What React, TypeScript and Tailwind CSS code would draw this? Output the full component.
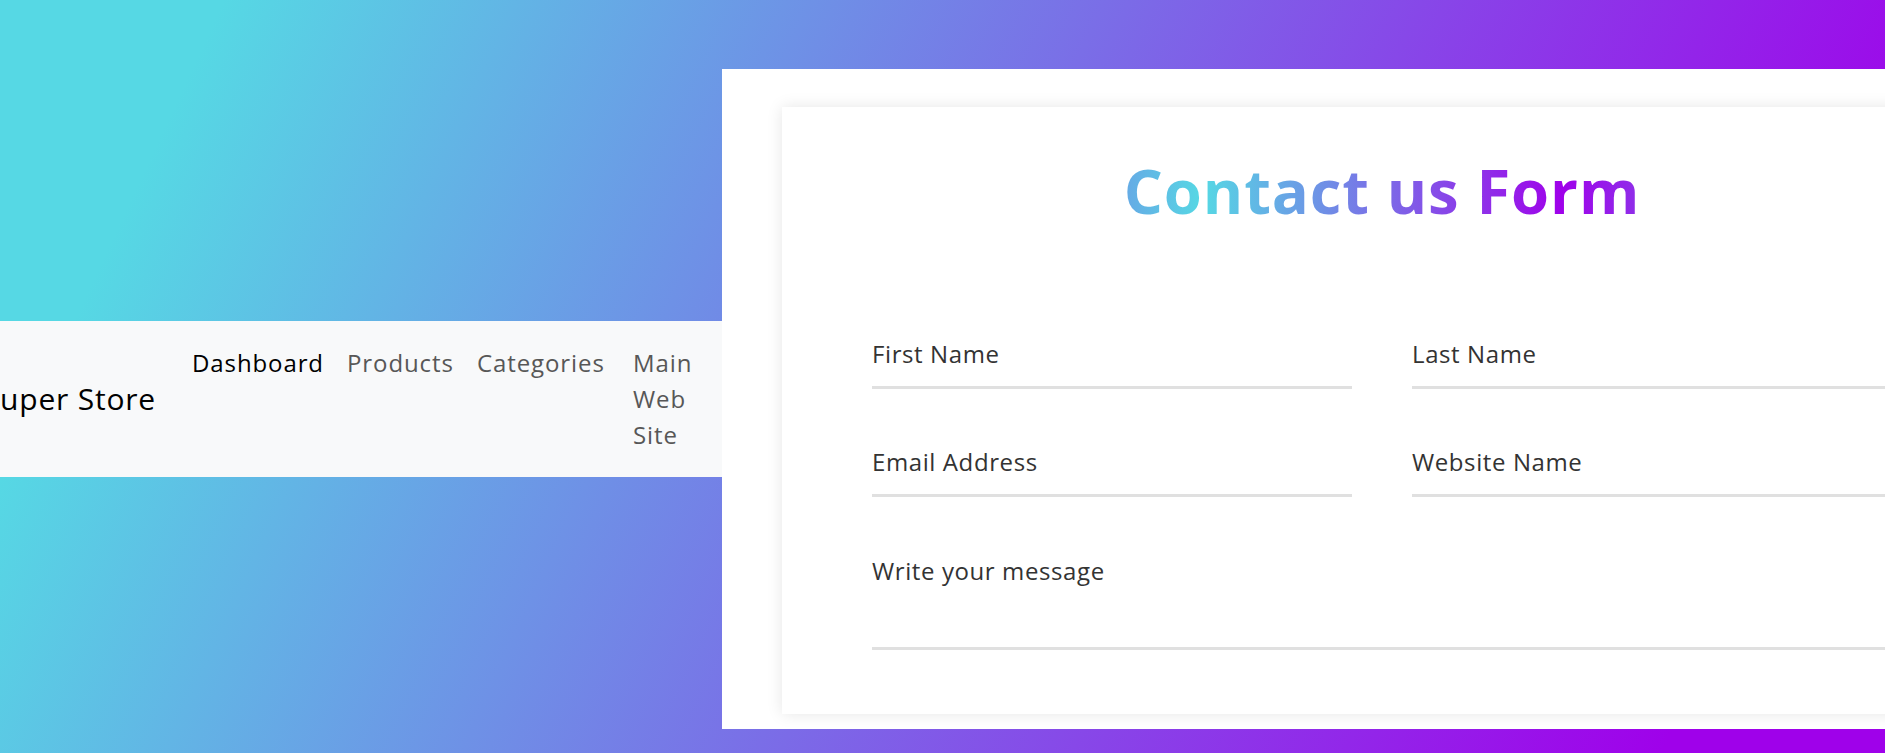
const links = [
  { label: "Dashboard", w: "w-[131px]", active: true },
  { label: "Products", w: "w-[106px]", active: false },
  { label: "Categories", w: "w-[132px]", active: false },
  { label: "Main Web Site", w: "w-[58px]", active: false },
];

const Field = ({ label, tall }: { label: string; tall?: boolean }) => {
  return (
    <div
      className={`flex-1 flex items-end border-b-[3px] border-[#e0e0e0] ${tall ? "h-[105px]" : "h-[60px]"}`}
    >
      <span
        className={`text-[24px] leading-[36px] tracking-[0.6px] text-[#333] ${tall ? "mb-[57.5px]" : "mb-[13.5px]"}`}
      >
        {label}
      </span>
    </div>
  );
};

export default function App() {
  return (
    <div className="w-[1885px] h-[753px] overflow-hidden bg-[linear-gradient(115deg,#56d8e4_10%,#9f01ea_90%)] font-['Open_Sans',sans-serif]">
      <div className="flex items-center pt-[69px]">
        {/* navbar, cut off on the left */}
        <nav className="ml-[-36px] w-[758px] shrink-0 bg-[#f8f9fa] py-[12px] pl-[18px] flex items-center">
          <a className="w-[174px] mr-[24px] py-[7.5px] text-right text-[30px] leading-[45px] text-black tracking-[0.8px] whitespace-nowrap">
            Super Store
          </a>
          <ul className="flex items-start">
            {links.map((l) => (
              <li key={l.label} className="px-[12px] py-[12px]">
                <a
                  className={`block ${l.w} text-[24px] leading-[36px] tracking-[0.9px] ${l.active ? "text-black" : "text-[#575757]"}`}
                >
                  {l.label}
                </a>
              </li>
            ))}
          </ul>
        </nav>

        <div className="w-[1320px] shrink-0 bg-white pt-[37.5px] px-[60px] pb-[15px]">
          <div className="bg-white shadow-[0_0_15px_rgba(0,0,0,0.1)] pt-[37.5px] px-[60px] pb-[15px]">
            <h1 className="text-center text-[61.5px] leading-[92px] font-bold tracking-[0.9px] bg-[linear-gradient(to_left,#56d8e4,#9f01ea,#56d8e4,#9f01ea)] bg-clip-text text-transparent">
              Contact us Form
            </h1>
            <form className="mt-[92.5px] mb-[49px]">
              <div className="flex gap-[60px] px-[30px]">
                <Field label="First Name" />
                <Field label="Last Name" />
              </div>
              <div className="flex gap-[60px] px-[30px] mt-[48px]">
                <Field label="Email Address" />
                <Field label="Website Name" />
              </div>
              <div className="flex px-[30px] mt-[48px]">
                <Field label="Write your message" tall />
              </div>
            </form>
          </div>
        </div>
      </div>
    </div>
  );
}
